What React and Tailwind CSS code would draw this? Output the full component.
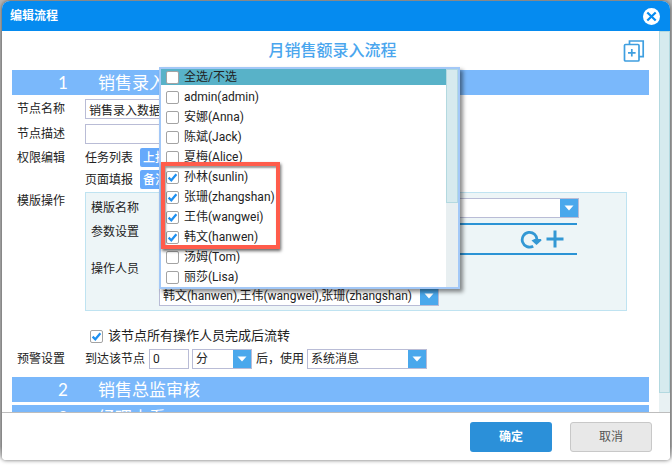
import React, { useState } from 'react';

const people = [
    'admin(admin)',
    '安娜(Anna)',
    '陈斌(Jack)',
    '夏梅(Alice)',
    '孙林(sunlin)',
    '张珊(zhangshan)',
    '王伟(wangwei)',
    '韩文(hanwen)',
    '汤姆(Tom)',
    '丽莎(Lisa)',
];

const CheckBox = ({ id, checked, onChange }) => (
    <span className="grid shrink-0">
        <input
            id={id}
            type="checkbox"
            checked={checked}
            onChange={onChange}
            className="col-start-1 row-start-1 size-[13px] appearance-none rounded-[2px] border border-[#a3a3a3] bg-white"
        />
        {checked && (
            <svg viewBox="0 0 13 13" className="pointer-events-none col-start-1 row-start-1 size-[13px]" fill="none" stroke="#1e90f0" strokeWidth="2.2">
                <path d="M2.6 6.6 5.3 9.3 10.4 3.2" />
            </svg>
        )}
    </span>
);

const Dropdown = ({ label, options, className }) => (
    <span className={`flex h-5 border border-[#b9bcd6] bg-white ${className}`}>
        <select aria-label={label} className="min-w-0 flex-1 appearance-none pl-[3px] outline-none">
            {options.map((option) => (
                <option key={option}>{option}</option>
            ))}
        </select>
        <span className="pointer-events-none flex w-[18px] shrink-0 items-center justify-center bg-[#4aa8ec]">
            <svg viewBox="0 0 10 6" className="h-[6px] w-[10px]" fill="#fff">
                <path d="M0.5 0.5h9L5 5.5z" />
            </svg>
        </span>
    </span>
);

const SectionBar = ({ number, title }) => (
    <h2 className="flex h-[25px] shrink-0 items-center bg-[#7ab8fb] font-['Lato','Noto_Sans_CJK_SC',sans-serif] text-[17px] text-white">
        <span className="w-[86px] pl-[46px]">{number}</span>
        <span>{title}</span>
    </h2>
);

const PeoplePopup = ({ picked, onToggle }) => {
    const all = people.every((name) => picked.includes(name));
    return (
        <div className="absolute top-[66px] left-[157px] flex w-[301px] border-2 border-[#a3c8f7] bg-white shadow-[3px_3px_4px_rgba(0,0,0,0.45)]">
            <ul className="flex-1">
                <li className="mb-[2px] flex h-4 items-center gap-[5px] bg-[#58b2c8] pl-[5px]">
                    <CheckBox id="pick-all" checked={all} onChange={() => onToggle(null)} />
                    <label htmlFor="pick-all">全选/不选</label>
                </li>
                {people.map((name) => (
                    <li key={name} className="flex h-5 items-center gap-[5px] pl-[5px]">
                        <CheckBox id={name} checked={picked.includes(name)} onChange={() => onToggle(name)} />
                        <label htmlFor={name}>{name}</label>
                    </li>
                ))}
            </ul>
            <div className="w-3 bg-[#e8eff1]">
                <div className="h-[134px] border border-[#b3d9e0] bg-[#d6eaee]" />
            </div>
            <div className="pointer-events-none absolute top-[93px] left-0 h-[87px] w-[119px] border-4 border-[#ff5c4b] shadow-[1px_2px_3px_rgba(0,0,0,0.6),inset_1px_2px_2px_rgba(0,0,0,0.4)]" />
        </div>
    );
};

const App = () => {
    const [picked, setPicked] = useState(people.slice(4, 8));
    const [waitAll, setWaitAll] = useState(true);

    const toggle = (name) => {
        if (name === null) {
            setPicked(picked.length === people.length ? [] : people);
        } else {
            setPicked(picked.includes(name) ? picked.filter((p) => p !== name) : [...picked, name]);
        }
    };

    return (
        <div className="flex h-screen flex-col bg-linear-to-b from-[#b5b5b5] from-96% to-white to-99% px-0.5 pt-px pb-[5px] font-['Roboto','Noto_Sans_CJK_SC',sans-serif] text-xs leading-4 text-[#222]">
            <div className="relative flex min-h-0 flex-1 flex-col rounded-t-lg rounded-b-sm bg-white shadow-[0_0_4px_rgba(0,0,0,0.6)]">
                <header className="flex h-[30px] shrink-0 items-center justify-between rounded-t-lg bg-[#058bf0] pr-[10px] pl-2 text-white">
                    <h1 className="font-bold">编辑流程</h1>
                    <button aria-label="关闭" className="size-[17px]">
                        <svg viewBox="0 0 17 17">
                            <circle cx="8.5" cy="8.5" r="8.5" fill="#fff" />
                            <path d="M4.3 4.5l8.4 8M12.7 4.5l-8.4 8" stroke="#058bf0" strokeWidth="2.2" />
                        </svg>
                    </button>
                </header>

                <div className="flex min-h-0 flex-1 overflow-hidden">
                    <main className="min-w-0 flex-1 pr-[10px] pl-[10px]">
                        <div className="grid h-[39px] grid-cols-[1fr_auto_1fr] items-center pl-1">
                            <span />
                            <div className="text-base leading-5 font-medium text-[#4aa6ee]">月销售额录入流程</div>
                            <button aria-label="复制" className="mr-1 size-[22px] justify-self-end">
                                <svg viewBox="0 0 22 22" fill="none" stroke="#3f9fe0" strokeWidth="1.7">
                                    <rect x="1.5" y="4.5" width="14.5" height="16.5" rx="1" />
                                    <path d="M6.5 4.5V1h13.7v15.6H16M8.8 9v7.6M5 12.8h7.6" />
                                </svg>
                            </button>
                        </div>
                        <SectionBar number="1" title="销售录入数据" />

                        <div className="flex flex-col gap-[5px] pt-1 pl-[5px]">
                            <div className="flex h-5 items-center">
                                <label htmlFor="node-name" className="w-[68px]">节点名称</label>
                                <input id="node-name" defaultValue="销售录入数据" className="h-5 w-[180px] border border-[#b9bcd6] bg-white pl-[3px]" />
                            </div>
                            <div className="flex h-5 items-center">
                                <label htmlFor="node-desc" className="w-[68px]">节点描述</label>
                                <input id="node-desc" className="h-5 w-[180px] border border-[#b9bcd6] bg-white pl-[3px]" />
                            </div>
                        </div>

                        <div className="flex pt-1 pl-[5px]">
                            <div className="w-[68px] pt-[2px]">权限编辑</div>
                            <div className="flex flex-col gap-[3px]">
                                <div className="flex items-center gap-[7px]">
                                    任务列表
                                    <button className="h-[19px] rounded-[2px] bg-[#66a9fb] px-[3px] font-medium text-white">上报</button>
                                </div>
                                <div className="flex items-center gap-[7px]">
                                    页面填报
                                    <button className="h-[19px] rounded-[2px] bg-[#66a9fb] px-[3px] font-medium text-white">备注</button>
                                </div>
                            </div>
                        </div>

                        <div className="flex pt-[3px] pl-[5px]">
                            <div className="w-[68px] pt-px">模版操作</div>
                            <div className="mr-[22px] flex-1 border border-[#bfe3f1] bg-[#edf5f7] pt-[5px] pr-[47px] pb-1 pl-[5px]">
                                <div className="flex items-center">
                                    <span className="w-[68px]">模版名称</span>
                                    <Dropdown label="模版名称" options={['']} className="flex-1" />
                                </div>
                                <div className="mt-[5px] flex pr-[2px]">
                                    <span className="w-[68px] pt-px">参数设置</span>
                                    <div className="flex h-8 flex-1 items-center justify-end gap-1 border-y-2 border-[#2b93d5] pr-[13px]">
                                        <button aria-label="刷新" className="h-5 w-[22px]">
                                            <svg viewBox="0 0 22 20" fill="none">
                                                <path d="M13.2 17.2A7.4 7.4 0 1 1 17 11" stroke="#3398d4" strokeWidth="2.8" />
                                                <path d="M11.5 11.5l3-1.6h6.5l.5 1.6-5 4.5z" fill="#3398d4" />
                                            </svg>
                                        </button>
                                        <button aria-label="添加" className="size-[18px]">
                                            <svg viewBox="0 0 18 18" stroke="#3398d4" strokeWidth="3">
                                                <path d="M9 0.5v17M0.5 9h17" />
                                            </svg>
                                        </button>
                                    </div>
                                </div>
                                <div className="mt-[6px] flex">
                                    <span className="w-[68px]">操作人员</span>
                                    <Dropdown label="操作人员" options={['韩文(hanwen),王伟(wangwei),张珊(zhangshan)']} className="mt-[25px] w-[280px]" />
                                </div>
                            </div>
                        </div>

                        <div className="flex items-center gap-[5px] pt-[15px] pl-[78px] text-[13px] leading-5">
                            <CheckBox id="wait-all" checked={waitAll} onChange={() => setWaitAll(!waitAll)} />
                            <label htmlFor="wait-all">该节点所有操作人员完成后流转</label>
                        </div>

                        <div className="mt-[3px] mb-2 flex items-center pl-[5px]">
                            <span className="w-[68px]">预警设置</span>
                            <label htmlFor="delay">到达该节点</label>
                            <input id="delay" defaultValue="0" className="mr-[3px] ml-1 h-5 w-10 border border-[#b9bcd6] bg-white pl-[3px]" />
                            <Dropdown label="时间单位" options={['分', '时', '天']} className="w-[60px]" />
                            <span className="mr-[3px] ml-1">后，使用</span>
                            <Dropdown label="提醒方式" options={['系统消息', '邮件']} className="w-[120px]" />
                        </div>

                        <div className="flex flex-col gap-[3px]">
                            <SectionBar number="2" title="销售总监审核" />
                            <SectionBar number="3" title="经理查看" />
                        </div>
                    </main>
                    <div className="w-[11px] shrink-0 bg-[#e8f1f3]">
                        <div className="h-[95%] border border-[#b3d9e0] bg-[#d6eaee]" />
                    </div>
                </div>

                <footer className="flex h-12 shrink-0 items-center justify-end gap-[18px] rounded-b-sm border-t border-[#bdbdbd] bg-white pr-[18px]">
                    <button className="h-[30px] w-[82px] rounded-[3px] bg-[#2b90d9] font-bold text-white">确定</button>
                    <button className="h-[30px] w-[82px] rounded-[3px] border border-[#c8c8c8] bg-[#e8e8e8] text-[#555]">取消</button>
                </footer>

                <PeoplePopup picked={picked} onToggle={toggle} />
            </div>
        </div>
    );
};

export default App;
